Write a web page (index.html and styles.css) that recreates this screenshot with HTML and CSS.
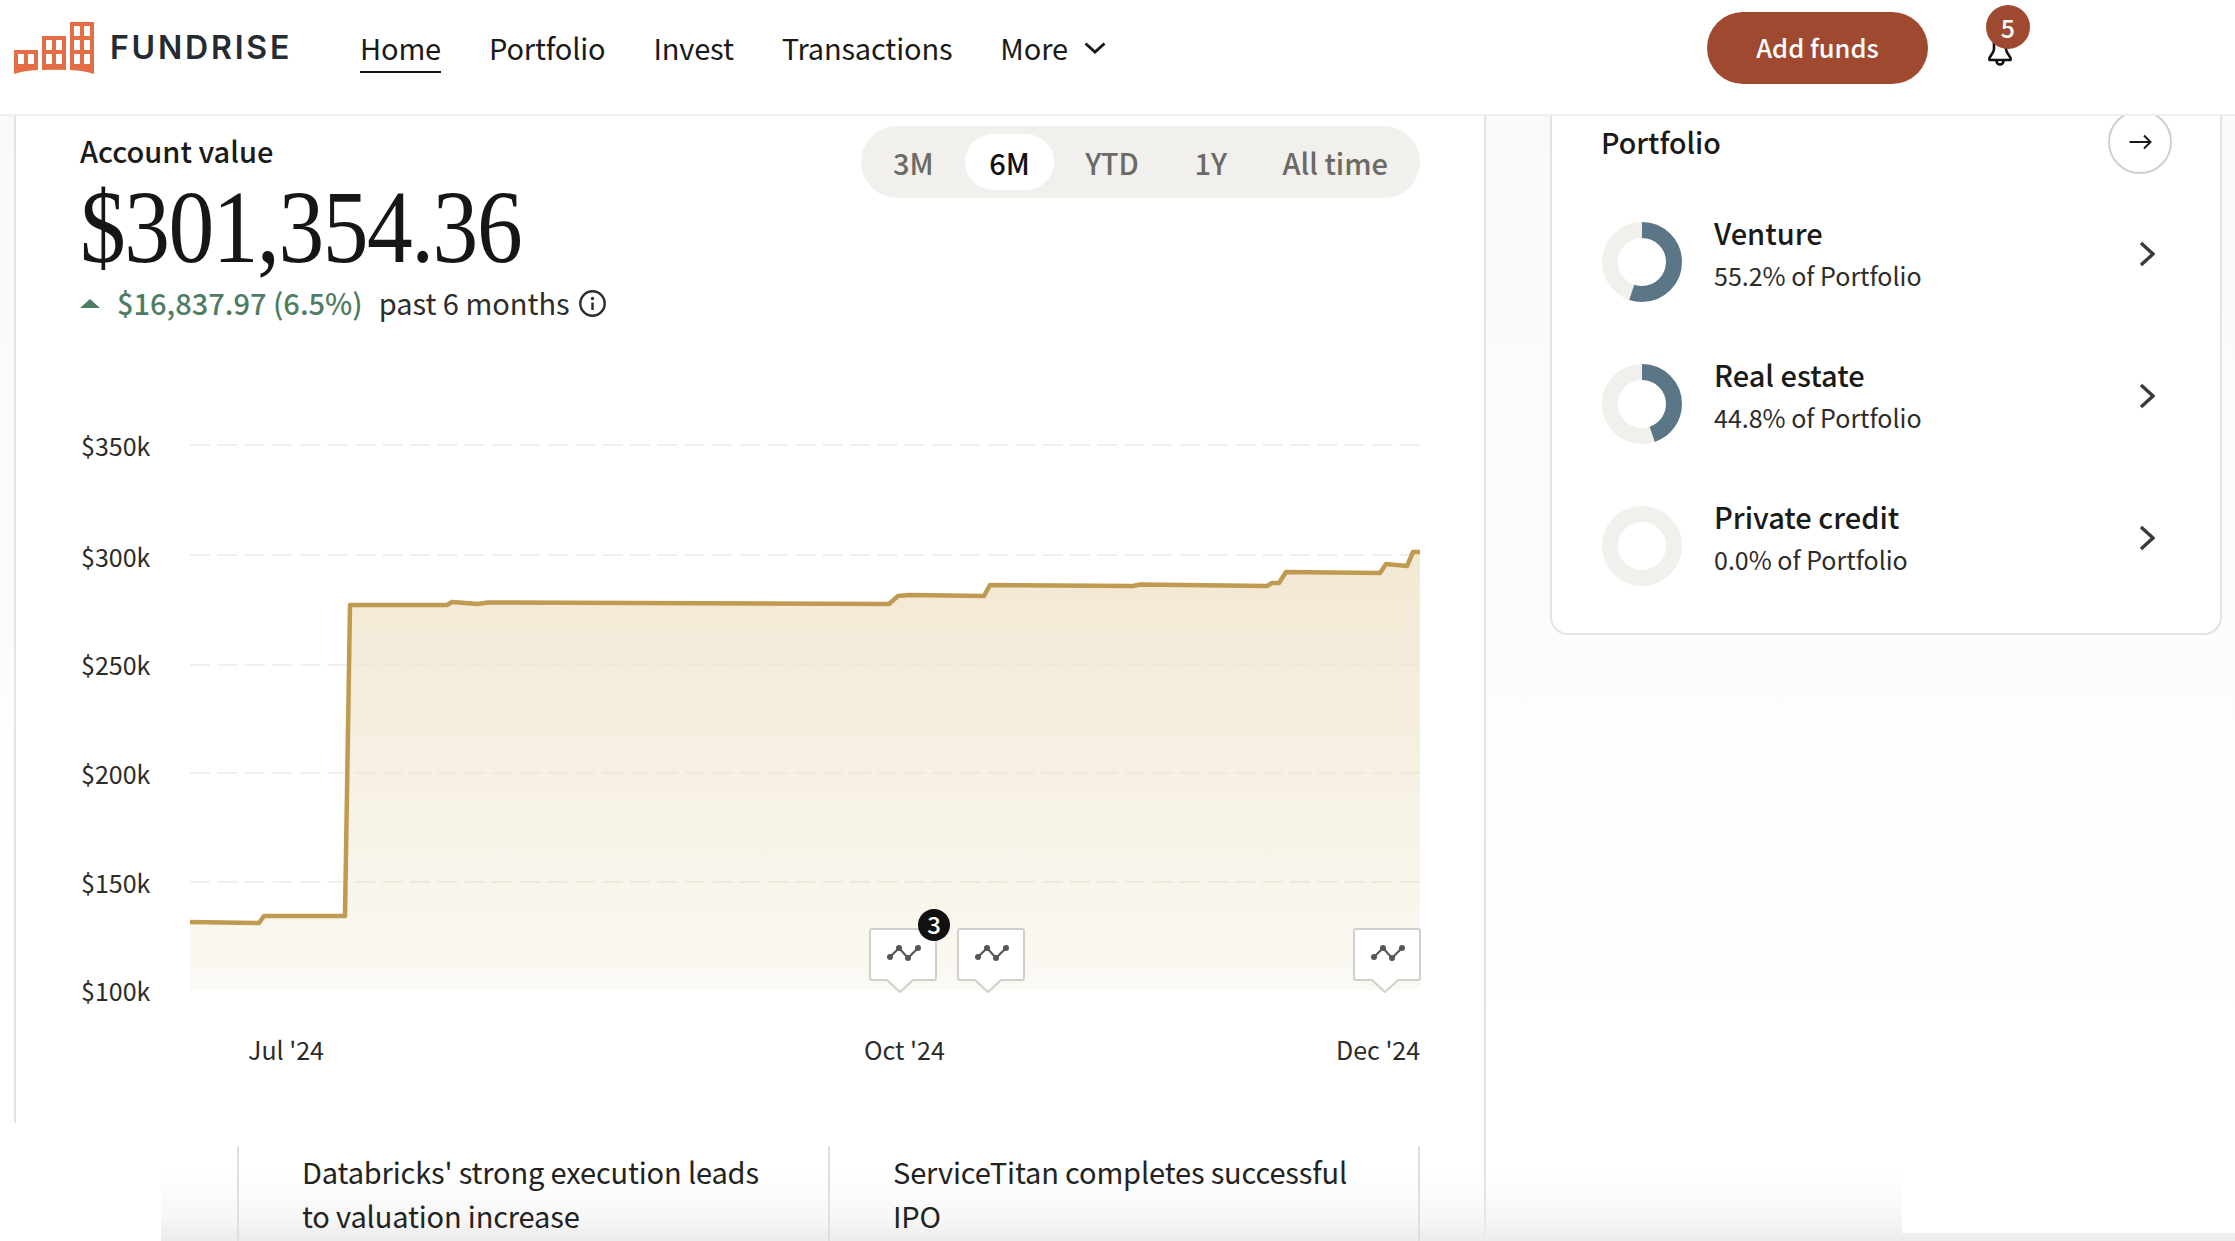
FILE: index.html
```html
<!DOCTYPE html>
<html lang="en">
<head>
<meta charset="utf-8">
<title>Fundrise</title>
<link rel="stylesheet" href="styles.css">
</head>
<body>
<header class="nav">
  <a class="brand">
    <svg class="logo" width="80" height="52" viewBox="0 0 80 52">
      <path class="logo-b" fill-rule="evenodd" d="M0 28H24V48Q10 48.500 0 52ZM4 32V42H10V32ZM14 32V42H20V32Z"/>
      <path class="logo-b" fill-rule="evenodd" d="M28 14H52V48Q40 47.500 28 48ZM32 18V28H38V18ZM42 18V28H48V18ZM32 32V42H38V32ZM42 32V42H48V32Z"/>
      <path class="logo-b" fill-rule="evenodd" d="M56 0H80V52Q70 48.500 56 48ZM60 4V14H66V4ZM70 4V14H76V4ZM60 18V28H66V18ZM70 18V28H76V18ZM60 32V42H66V32ZM70 32V42H76V32Z"/>
    </svg>
    <span class="wordmark">FUNDRISE</span>
  </a>
  <nav class="links">
    <a class="link active">Home</a>
    <a class="link">Portfolio</a>
    <a class="link">Invest</a>
    <a class="link">Transactions</a>
    <a class="link more">More
      <svg class="more-chev" width="22" height="12" viewBox="0 0 22 12"><path class="stroke-3" d="M1.500 1.500 11 10 20.500 1.500"/></svg>
    </a>
  </nav>
  <button class="add">Add funds</button>
  <div class="bell">
    <svg width="24" height="28" viewBox="0 0 24 28"><path class="bell-path" d="M6 1V9C6 13 2.500 15 1.500 18V20H22.500V18C21.500 15 18 13 18 9V1"/><path class="bell-path" d="M8.500 21A3.500 3.500 0 0 0 15.500 21"/></svg>
    <span class="badge">5</span>
  </div>
</header>

<main class="main">
  <div class="col">
    <section class="panel">
      <div class="head">
        <div class="value">
          <div class="label">Account value</div>
          <div class="amount"><span class="amount-text">$301,354.36</span></div>
          <div class="change">
            <svg class="tri" width="20" height="9" viewBox="0 0 20 9"><path d="M10 0 20 9H0Z"/></svg>
            <span class="gain">$16,837.97 (6.5%)</span>
            <span class="period">past 6 months</span>
            <svg width="27" height="27" viewBox="0 0 27 27"><circle class="info" cx="13.500" cy="13.500" r="12.200"/><path class="info" d="M13.500 12.500V20"/><circle class="info-dot" cx="13.500" cy="8.500" r="1.700"/></svg>
          </div>
        </div>
        <div class="ranges">
          <span class="range">3M</span>
          <span class="range on">6M</span>
          <span class="range">YTD</span>
          <span class="range">1Y</span>
          <span class="range">All time</span>
        </div>
      </div>
      <svg class="chart" width="1340" height="650" viewBox="80 420 1340 650">
        <defs>
          <linearGradient id="fill" x1="0" y1="0" x2="0" y2="1">
            <stop offset="0" stop-color="#f2e8d3"/>
            <stop offset="1" stop-color="#fbf9f4"/>
          </linearGradient>
          <clipPath id="under">
            <path d="M190 922 259 923 264 916 345 916 350 605 447 605 452 602 478 604 488 602.500 889 604 898 596 909 595 984 596 990 585 1133 586 1140 584.500 1267 586 1272 583 1279 583 1286 572 1380 573 1386 564 1407 566 1413 552 1420 552V990H190Z"/>
          </clipPath>
        </defs>
        <g class="grid">
          <path d="M190 445H1420"/><path d="M190 555H1420"/><path d="M190 665H1420"/>
          <path d="M190 773H1420"/><path d="M190 882H1420"/>
        </g>
        <path fill="url(#fill)" d="M190 922 259 923 264 916 345 916 350 605 447 605 452 602 478 604 488 602.500 889 604 898 596 909 595 984 596 990 585 1133 586 1140 584.500 1267 586 1272 583 1279 583 1286 572 1380 573 1386 564 1407 566 1413 552 1420 552V990H190Z"/>
        <path class="grid-over" clip-path="url(#under)" d="M190 665H1420M190 773H1420M190 882H1420"/>
        <path class="line" d="M190 922 259 923 264 916 345 916 350 605 447 605 452 602 478 604 488 602.500 889 604 898 596 909 595 984 596 990 585 1133 586 1140 584.500 1267 586 1272 583 1279 583 1286 572 1380 573 1386 564 1407 566 1413 552 1420 552"/>
        <g class="axis">
          <text x="81" y="456">$350k</text>
          <text x="81" y="567">$300k</text>
          <text x="81" y="675">$250k</text>
          <text x="81" y="784">$200k</text>
          <text x="81" y="893">$150k</text>
          <text x="81" y="1001">$100k</text>
          <text x="248" y="1060">Jul '24</text>
          <text x="864" y="1060">Oct '24</text>
          <text x="1336" y="1060">Dec '24</text>
        </g>
        <g class="flags" transform="translate(0 1)">
          <path d="M872 928H934a2 2 0 0 1 2 2V977a2 2 0 0 1-2 2H913L900 991 887 979H872a2 2 0 0 1-2-2V930a2 2 0 0 1 2-2Z"/>
          <path d="M960 928H1022a2 2 0 0 1 2 2V977a2 2 0 0 1-2 2H1001L988 991 975 979H960a2 2 0 0 1-2-2V930a2 2 0 0 1 2-2Z"/>
          <path d="M1356 928H1418a2 2 0 0 1 2 2V977a2 2 0 0 1-2 2H1398L1385 991 1372 979H1356a2 2 0 0 1-2-2V930a2 2 0 0 1 2-2Z"/>
        </g>
        <g class="spark" transform="translate(0 1)">
          <path d="M890 956 899 947 908 957 918 947"/><circle cx="890" cy="956" r="3"/><circle cx="899" cy="947" r="3"/><circle cx="908" cy="957" r="3"/><circle cx="918" cy="947" r="3"/>
          <path d="M978 956 987 947 996 957 1006 947"/><circle cx="978" cy="956" r="3"/><circle cx="987" cy="947" r="3"/><circle cx="996" cy="957" r="3"/><circle cx="1006" cy="947" r="3"/>
          <path d="M1374 956 1383 947 1392 957 1402 947"/><circle cx="1374" cy="956" r="3"/><circle cx="1383" cy="947" r="3"/><circle cx="1392" cy="957" r="3"/><circle cx="1402" cy="947" r="3"/>
        </g>
        <circle class="count-dot" cx="934" cy="925" r="16"/>
        <text class="count" x="934" y="933.500" text-anchor="middle">3</text>
      </svg>
    </section>
    <section class="articles">
      <article class="article">Databricks' strong execution leads to valuation increase</article>
      <article class="article">ServiceTitan completes successful IPO</article>
    </section>
  </div>

  <aside class="side">
    <div class="card">
      <div class="card-head">
        <h2 class="card-title">Portfolio</h2>
        <span class="go">
          <svg width="24" height="20" viewBox="0 0 24 20"><path class="stroke-2" d="M1.500 10H22.500M16 3.500 22.500 10 16 16.500"/></svg>
        </span>
      </div>
      <div class="row">
        <svg class="donut" width="80" height="80" viewBox="0 0 80 80"><circle class="ring" cx="40" cy="40" r="32"/><circle class="ring-on" cx="40" cy="40" r="32" pathLength="100" stroke-dasharray="55.2 100" transform="rotate(-90 40 40)"/></svg>
        <div class="row-text"><div class="row-name">Venture</div><div class="row-sub">55.2% of Portfolio</div></div>
        <svg class="chev" width="16" height="26" viewBox="0 0 16 26"><path class="stroke-3b" d="M2 2 14 13 2 24"/></svg>
      </div>
      <div class="row">
        <svg class="donut" width="80" height="80" viewBox="0 0 80 80"><circle class="ring" cx="40" cy="40" r="32"/><circle class="ring-on" cx="40" cy="40" r="32" pathLength="100" stroke-dasharray="44.8 100" transform="rotate(-90 40 40)"/></svg>
        <div class="row-text"><div class="row-name">Real estate</div><div class="row-sub">44.8% of Portfolio</div></div>
        <svg class="chev" width="16" height="26" viewBox="0 0 16 26"><path class="stroke-3b" d="M2 2 14 13 2 24"/></svg>
      </div>
      <div class="row">
        <svg class="donut" width="80" height="80" viewBox="0 0 80 80"><circle class="ring" cx="40" cy="40" r="32"/></svg>
        <div class="row-text"><div class="row-name">Private credit</div><div class="row-sub">0.0% of Portfolio</div></div>
        <svg class="chev" width="16" height="26" viewBox="0 0 16 26"><path class="stroke-3b" d="M2 2 14 13 2 24"/></svg>
      </div>
    </div>
  </aside>
  <div class="fade"></div>
  <div class="corner"></div>
</main>
</body>
</html>
```

FILE: styles.css
```css
* { box-sizing: border-box; }
html, body { margin: 0; height: 1241px; overflow: hidden; background: #fff; }
body {
  font-family: "Noto Sans CJK SC", "Source Sans Pro", "Noto Sans", sans-serif;
  color: #1a1a18;
}

/* top bar */
.nav {
  position: relative;
  z-index: 3;
  display: flex;
  align-items: center;
  height: 116px;
  padding: 12px 223px 31px 14px;
  background: #fff;
  border-bottom: 2px solid #f1f0ec;
}
.brand { display: flex; align-items: center; gap: 16px; width: 274px; margin-right: 72px; }
.logo { flex: none; }
.logo-b { fill: #e56d45; }
.wordmark {
  font-family: Inter, "Liberation Sans", sans-serif;
  font-size: 32px;
  font-weight: 600;
  letter-spacing: 2.800px;
  color: #252a33;
  line-height: 40px;
}
.links { display: flex; gap: 48px; }
.link {
  display: flex;
  align-items: center;
  gap: 16px;
  height: 50px;
  line-height: 48px;
  font-size: 29px;
  letter-spacing: -0.15px;
  border-bottom: 2px solid transparent;
  color: #1a1a18;
}
.link.active { border-bottom-color: #111; }
.more-chev { margin-top: 2px; }
.stroke-3 { fill: none; stroke: #1a1a18; stroke-width: 3; }
.add {
  width: 221px;
  height: 72px;
  margin-left: auto;
  padding: 0 0 3px;
  border: 0;
  border-radius: 36px;
  background: #9f4a30;
  color: #fff;
  font: 500 25.500px "Noto Sans CJK SC", sans-serif;
}
.bell { position: relative; width: 24px; height: 28px; margin: 13px 0 0 60px; }
.bell svg { display: block; }
.bell-path { fill: none; stroke: #111; stroke-width: 2.6; stroke-linejoin: round; }
.badge {
  position: absolute;
  left: -2px;
  top: -35px;
  width: 44px;
  height: 44px;
  border-radius: 50%;
  background: #9f4a30;
  color: #fff;
  font-size: 25px;
  font-weight: 500;
  line-height: 44px;
  text-align: center;
}

/* page body */
.main {
  position: relative;
  display: flex;
  height: 1125px;
  overflow: hidden;
  padding-left: 14px;
  background: linear-gradient(#f9f9f7 0, #fcfcfb 500px, #fff 900px);
}
.col {
  width: 1472px;
  flex: none;
  background: #fff;
  border-right: 2px solid #e4e3df;
}
.panel {
  height: 1007px;
  padding: 10px 0 0 64px;
  border-left: 2px solid #e4e3df;
}
.head { display: flex; justify-content: space-between; align-items: flex-start; width: 1340px; }
.value { padding-top: 8px; }
.label { font-size: 29px; font-weight: 500; line-height: 33px; }
.amount {
  margin: 3px 0 3px;
  height: 113px;
  font-family: "Liberation Serif", serif;
  font-size: 104px;
  line-height: 113px;
  white-space: nowrap;
  color: #161614;
}
.amount-text {
  display: inline-block;
  letter-spacing: -1.700px;
  transform: scaleX(.88);
  transform-origin: left center;
}
.change { display: flex; align-items: center; height: 34px; }
.tri { margin-right: 17px; }
.tri path { fill: #4f7d64; }
.gain { margin-bottom: 2px; color: #4f7d64; font-size: 29px; font-weight: 500; }
.period { margin: 0 9px 2px 16px; font-size: 29px; color: #2c2c2a; }
.info { fill: none; stroke: #2c2c2a; stroke-width: 2.4; }
.info-dot { fill: #2c2c2a; }
.ranges {
  display: flex;
  align-items: center;
  justify-content: space-between;
  width: 559px;
  height: 72px;
  padding: 0 8px;
  border-radius: 36px;
  background: #f1f0ec;
}
.range {
  padding: 0 24px;
  height: 56px;
  line-height: 56px;
  border-radius: 28px;
  font-size: 29px;
  font-weight: 500;
  color: #6b6a65;
}
.range.on { background: #fff; color: #111; }
.chart { display: block; margin-top: 100px; overflow: visible; }
.grid path { fill: none; stroke: #f1f0ec; stroke-width: 2; stroke-dasharray: 20 7.5; }
.grid-over { fill: none; stroke: #efe8d8; stroke-width: 2; stroke-dasharray: 20 7.500; }
.line { fill: none; stroke: #c09a50; stroke-width: 4.500; stroke-linejoin: round; }
.axis text { font-size: 25px; fill: #2c2c2a; }
.flags path { fill: #fff; stroke: #d0cfca; stroke-width: 2; stroke-linejoin: round; }
.spark path { fill: none; stroke: #54565a; stroke-width: 2.2; }
.spark circle { fill: #54565a; }
.count-dot { fill: #111; }
.count { font-size: 24px; font-weight: 500; fill: #fff; }

.articles {
  position: relative;
  z-index: 2;
  display: grid;
  grid-template-columns: 591px 592px;
  margin: 23px 0 0 223px;
  width: 1183px;
  height: 96px;
  border-right: 2px solid #e0dfdb;
}
.article {
  padding: 3px 55px 0 63px;
  border-left: 2px solid #e0dfdb;
  font-size: 29px;
  letter-spacing: -0.15px;
  line-height: 44px;
  color: #222220;
}

/* right column */
.side { flex: 1; padding-left: 64px; }
.card {
  width: 672px;
  height: 559px;
  margin-top: -40px;
  padding: 32px 48px 0 49px;
  background: #fff;
  border: 2px solid #e4e3df;
  border-radius: 18px;
}
.card-head { display: flex; justify-content: space-between; align-items: center; height: 64px; margin-bottom: 48px; }
.card-title { margin: 0; font-size: 28.600px; font-weight: 500; line-height: 40px; }
.go {
  display: flex;
  align-items: center;
  justify-content: center;
  width: 64px;
  height: 64px;
  border: 2px solid #d0cfca;
  border-radius: 50%;
  background: #fff;
}
.stroke-2 { fill: none; stroke: #1a1a18; stroke-width: 2; }
.row { display: flex; align-items: flex-start; height: 80px; margin: 0 0 62px 1px; padding-right: 17px; }
.donut { flex: none; display: block; }
.ring { fill: none; stroke: #f1f0ec; stroke-width: 16; }
.ring-on { fill: none; stroke: #5b7686; stroke-width: 16; }
.row-text { flex: 1; margin: -9px 0 0 32px; }
.row-name { font-size: 29px; font-weight: 500; line-height: 38px; }
.row-sub { font-size: 25px; line-height: 49px; color: #2c2c2a; }
.chev { flex: none; margin-top: 19px; }
.stroke-3b { fill: none; stroke: #3a3a38; stroke-width: 3.4; }

/* bottom overlay */
.fade {
  position: absolute;
  z-index: 1;
  left: 161px;
  right: 0;
  bottom: 0;
  height: 72px;
  background: linear-gradient(rgba(236,236,236,0), rgba(236,236,236,.4) 65%, #ececec);
  pointer-events: none;
}
.corner {
  position: absolute;
  z-index: 1;
  right: 0;
  bottom: 8px;
  width: 333px;
  height: 64px;
  background: #fff;
}
```
